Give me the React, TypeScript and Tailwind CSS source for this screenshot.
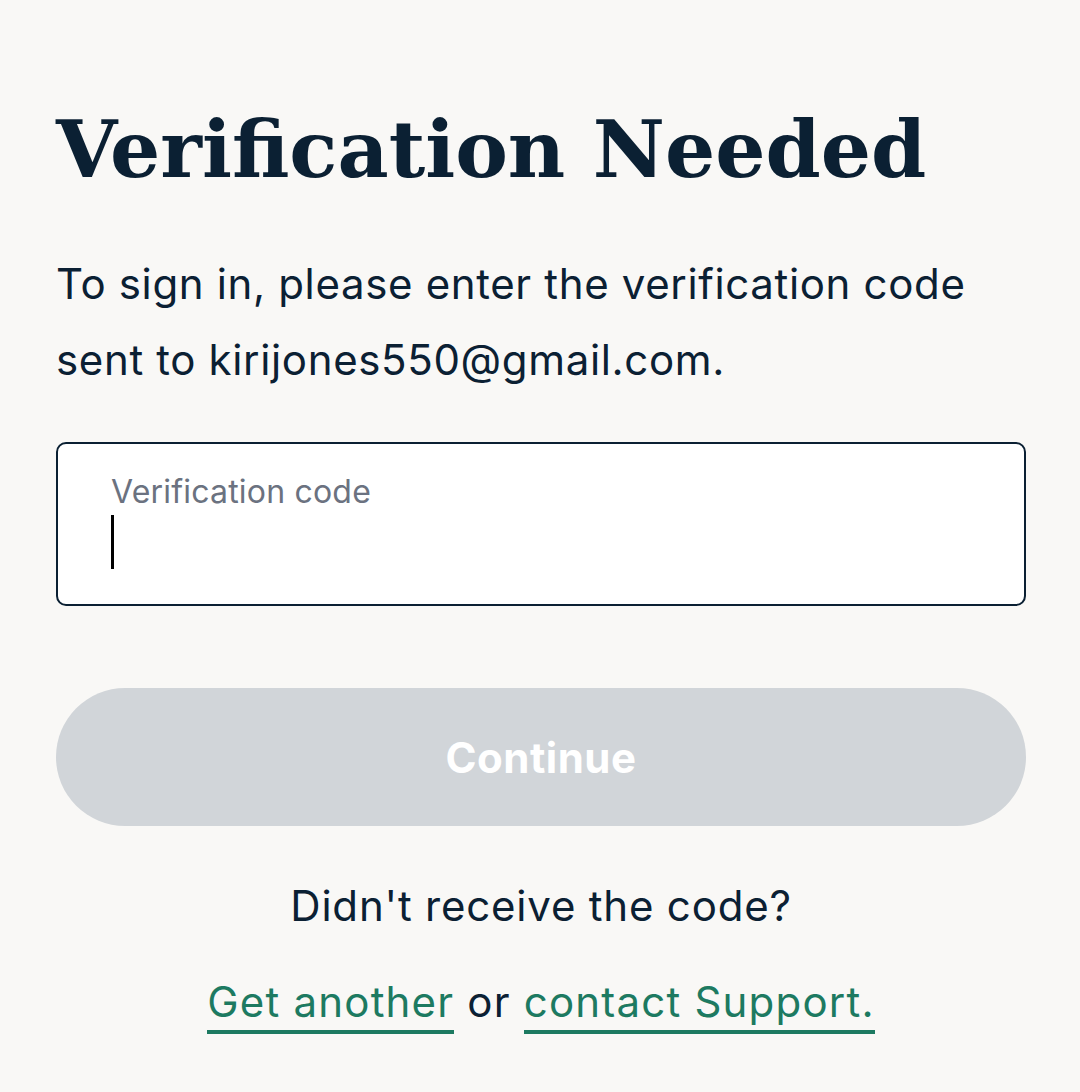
export default function App() {
  return (
    <div className="min-h-screen w-full bg-[#f9f8f6] px-[56px] pt-[110px] text-[#0b2033] [font-family:Inter,'Noto_Sans',sans-serif]">
      <h1 className="text-[79px] font-bold leading-[1] text-[#0b2033] [font-family:'DejaVu_Serif','Liberation_Serif',serif]">
        Verification Needed
      </h1>

      <p className="mt-[57px] text-[42px] leading-[76px] tracking-[0.65px]">
        To sign in, please enter the verification code sent to kirijones550@gmail.com.
      </p>

      {/* code field */}
      <label className="mt-[44px] flex h-[164px] w-[970px] flex-col rounded-[10px] border-2 border-[#0b2033] bg-white px-[53px] pt-[28px]">
        <span className="text-[32px] leading-[40px] tracking-[0.2px] text-[#6b7280]">Verification code</span>
        <span className="mt-[3px] h-[54px] w-[3px] bg-black" />
      </label>

      <button className="mt-[82px] flex h-[138px] w-[970px] items-center justify-center rounded-full bg-[#d1d5d9] text-[42px] font-bold tracking-[0.5px] text-white">
        Continue
      </button>

      <div className="mt-[52px] flex w-[970px] flex-col items-center text-[42px] tracking-[0.8px]">
        <p className="leading-[56px]">Didn't receive the code?</p>
        <p className="mt-[40px] leading-[56px] tracking-[1.2px]">
          <a className="border-b-4 border-[#1d7a61] pb-[3px] text-[#1d7a61]">Get another</a>
          <span> or </span>
          <a className="border-b-4 border-[#1d7a61] pb-[3px] text-[#1d7a61]">contact Support.</a>
        </p>
      </div>
    </div>
  );
}
